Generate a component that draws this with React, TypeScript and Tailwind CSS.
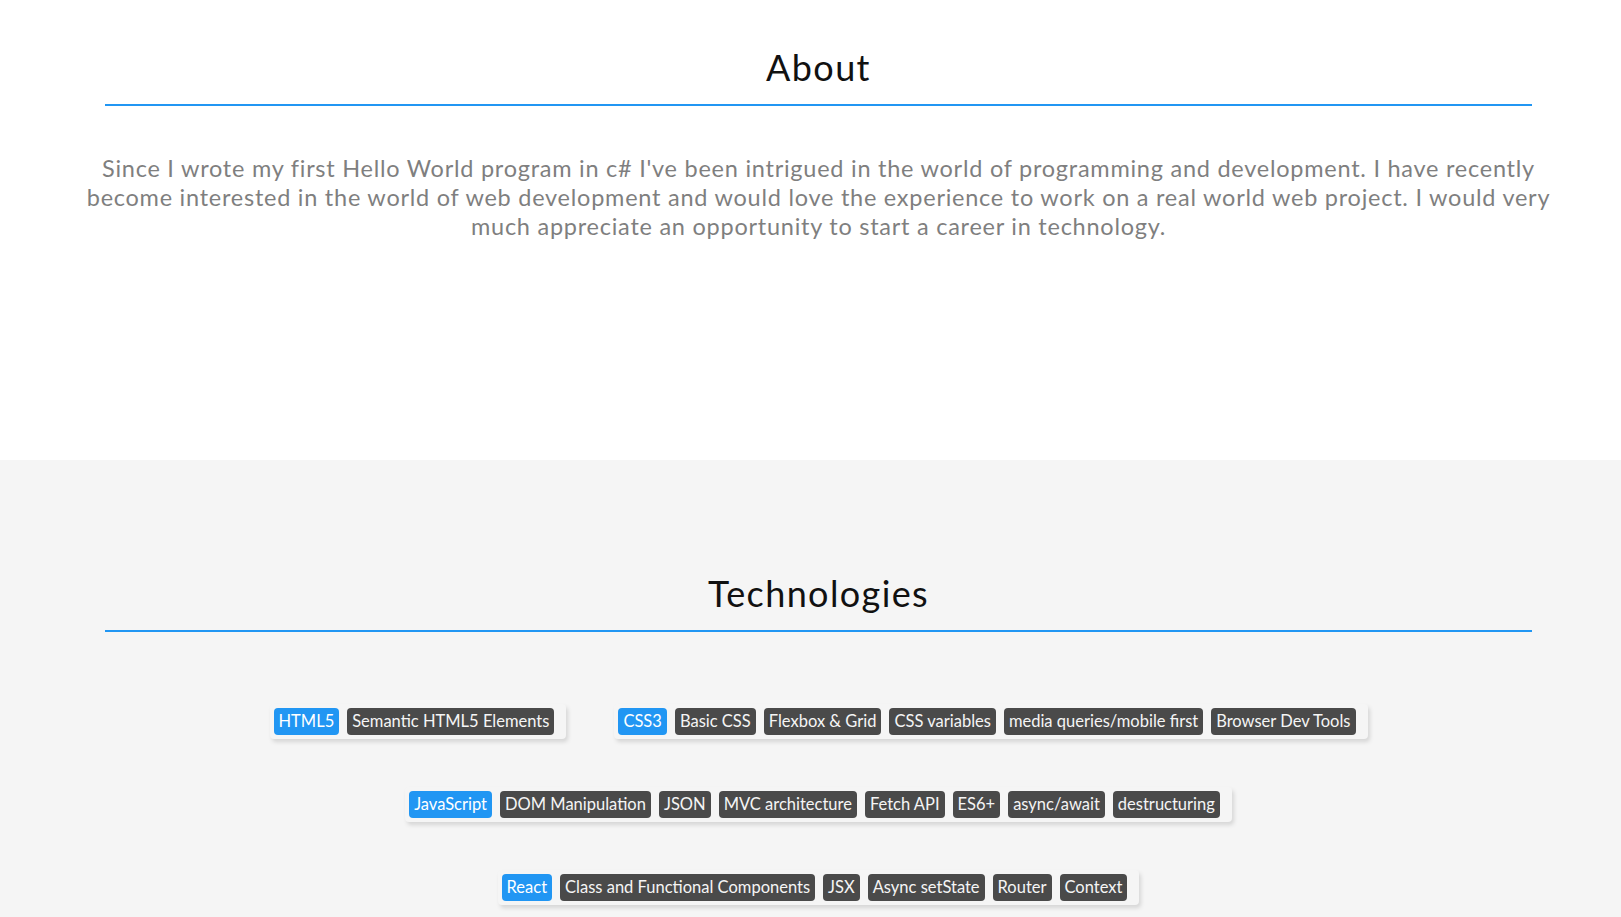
import React from 'react';

type Group = { main: string; items: string[] };

const groups: Group[] = [
  { main: 'HTML5', items: ['Semantic HTML5 Elements'] },
  {
    main: 'CSS3',
    items: ['Basic CSS', 'Flexbox & Grid', 'CSS variables', 'media queries/mobile first', 'Browser Dev Tools'],
  },
  {
    main: 'JavaScript',
    items: ['DOM Manipulation', 'JSON', 'MVC architecture', 'Fetch API', 'ES6+', 'async/await', 'destructuring'],
  },
  {
    main: 'React',
    items: ['Class and Functional Components', 'JSX', 'Async setState', 'Router', 'Context'],
  },
];

function Heading({ title }: { title: string }) {
  return (
    <div className="mx-[89px]">
      <h2 className="text-center text-[36px] leading-[44px] tracking-[1.4px] text-[#111] font-normal">{title}</h2>
      <div className="mt-[15px] h-[2px] bg-[#2196f3]" />
    </div>
  );
}

function TechCard({ group }: { group: Group }) {
  return (
    <div className="m-6 flex p-1 rounded-[4px] bg-[#f5f5f5] shadow-[2px_3px_4px_rgba(0,0,0,0.13)]">
      <span className="mr-2 h-[27px] flex items-center px-[5px] rounded-[4px] bg-[#2196f3] text-white text-[16.5px]">
        {group.main}
      </span>
      {group.items.map((item) => (
        <span
          key={item}
          className="mr-2 h-[27px] flex items-center px-[5px] rounded-[4px] bg-[#4a4a4a] text-[#f5f5f5] text-[16.5px] whitespace-nowrap"
        >
          {item}
        </span>
      ))}
    </div>
  );
}

export default function App() {
  return (
    <div className="min-h-screen bg-white" style={{ fontFamily: 'Lato, "Open Sans", sans-serif' }}>
      {/* About */}
      <section className="pl-[16px] pt-[45px] pb-[219px] bg-white">
        <Heading title="About" />
        <p className="mt-[48px] px-[56px] text-center text-[23.5px] leading-[29px] tracking-[0.75px] text-[#7f7f7f]">
          Since I wrote my first Hello World program in c# I've been intrigued in the world of programming and
          development. I have recently become interested in the world of web development and would love the
          experience to work on a real world web project. I would very much appreciate an opportunity to start a
          career in technology.
        </p>
      </section>

      {/* Technologies */}
      <section className="pl-[16px] pt-[111px] pb-[40px] bg-[#f5f5f5]">
        <Heading title="Technologies" />
        <div className="mt-[48px] mx-[89px] flex flex-wrap justify-center">
          {groups.map((g) => (
            <TechCard key={g.main} group={g} />
          ))}
        </div>
      </section>
    </div>
  );
}
